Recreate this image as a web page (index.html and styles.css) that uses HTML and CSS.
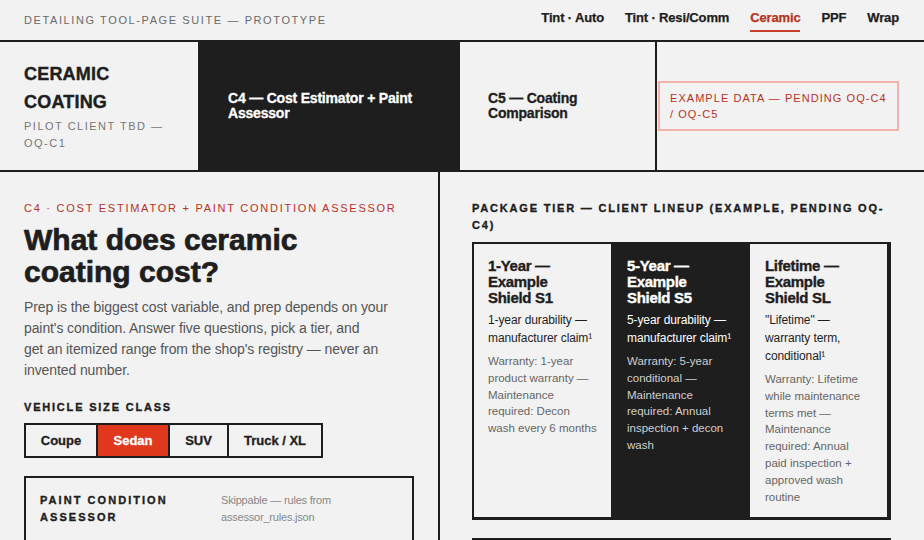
FILE: index.html
```html
<!DOCTYPE html>
<html>
<head>
<meta charset="utf-8">
<link rel="stylesheet" href="styles.css">
</head>
<body>
<header class="topbar">
  <div class="suite">Detailing tool-page suite — prototype</div>
  <nav class="nav">
    <a class="nav-item">Tint · Auto</a>
    <a class="nav-item">Tint · Resi/Comm</a>
    <a class="nav-item active">Ceramic</a>
    <a class="nav-item">PPF</a>
    <a class="nav-item">Wrap</a>
  </nav>
</header>
<section class="tabs">
  <div class="tab brand">
    <div class="brand-title">CERAMIC<br>COATING</div>
    <div class="brand-sub">Pilot client TBD — OQ-C1</div>
  </div>
  <div class="tab tab-dark">C4 — Cost Estimator + Paint Assessor</div>
  <div class="tab tab-light">C5 — Coating Comparison</div>
  <div class="tab tab-badge"><div class="badge">Example data — pending OQ-C4 / OQ-C5</div></div>
</section>
<main class="main">
  <section class="left">
    <div class="eyebrow">C4 · Cost estimator + paint condition assessor</div>
    <h1 class="title">What does ceramic coating cost?</h1>
    <p class="lede">Prep is the biggest cost variable, and prep depends on your paint's condition. Answer five questions, pick a tier, and get&nbsp;an itemized range from the shop's registry — never an invented number.</p>
    <div class="label">Vehicle size class</div>
    <div class="seg">
      <button class="seg-btn">Coupe</button>
      <button class="seg-btn on">Sedan</button>
      <button class="seg-btn">SUV</button>
      <button class="seg-btn">Truck / XL</button>
    </div>
    <div class="panel">
      <div class="panel-label">Paint condition assessor</div>
      <div class="panel-note">Skippable — rules from assessor_rules.json</div>
    </div>
  </section>
  <section class="right">
    <div class="label wide">Package tier — client lineup (example, pending OQ-C4)</div>
    <div class="cards">
      <div class="card">
        <div class="card-title">1-Year — Example Shield S1</div>
        <div class="card-sub">1-year durability — manufacturer claim¹</div>
        <div class="card-body">Warranty: 1-year product warranty — Maintenance required: Decon wash every 6 months</div>
      </div>
      <div class="card dark">
        <div class="card-title">5-Year — Example Shield S5</div>
        <div class="card-sub">5-year durability — manufacturer claim¹</div>
        <div class="card-body">Warranty: 5-year conditional — Maintenance required: Annual inspection + decon wash</div>
      </div>
      <div class="card">
        <div class="card-title">Lifetime — Example Shield SL</div>
        <div class="card-sub">"Lifetime" — warranty term, conditional¹</div>
        <div class="card-body">Warranty: Lifetime while maintenance terms met — Maintenance required: Annual paid inspection + approved wash routine</div>
      </div>
    </div>
    <div class="next-box"></div>
  </section>
</main>
</body>
</html>
```
FILE: styles.css
```css
* { box-sizing: border-box; }
html, body { margin: 0; padding: 0; }
body {
  background: #f2f2f2;
  color: #1e1e1e;
  font-family: "Liberation Sans", Arial, sans-serif;
  width: 924px;
  height: 540px;
  overflow: hidden;
}
.topbar {
  height: 42px;
  border-bottom: 2px solid #1e1e1e;
  display: flex;
  align-items: center;
  justify-content: space-between;
  padding: 0 25px 0 24px;
}
.suite {
  font-size: 11px;
  letter-spacing: 1.6px;
  text-transform: uppercase;
  color: #6a6a6a;
}
.nav { display: flex; gap: 21px; align-items: flex-start; margin-top: 2px; }
.nav-item {
  font-size: 13px;
  font-weight: 700;
  line-height: 16px;
  letter-spacing: -0.15px;
  padding-bottom: 4px;
  border-bottom: 2px solid transparent;
  color: #1e1e1e;
  -webkit-text-stroke: 0.25px currentColor;
}
.nav-item.active { color: #b8321f; border-bottom-color: #c8402c; }

.tabs {
  display: grid;
  grid-template-columns: 198px 262px 195px 1fr;
  height: 130px;
  border-bottom: 2px solid #1e1e1e;
}
.tab { display: flex; align-items: center; }
.brand {
  flex-direction: column;
  align-items: flex-start;
  justify-content: center;
  padding: 0 24px;
  border-right: 1px solid #fafafa;
}
.brand-title {
  font-size: 18px;
  font-weight: 700;
  line-height: 28px;
  letter-spacing: 0.2px;
  -webkit-text-stroke: 0.4px currentColor;
}
.brand-sub {
  font-size: 11px;
  line-height: 17px;
  letter-spacing: 1.5px;
  text-transform: uppercase;
  color: #777;
  margin-top: 2px;
}
.tab-dark {
  background: #1e1e1e;
  color: #fff;
  font-size: 14px;
  font-weight: 700;
  line-height: 15px;
  letter-spacing: -0.2px;
  padding: 0 28px 0 30px;
  -webkit-text-stroke: 0.3px currentColor;
}
.tab-light {
  font-size: 14px;
  font-weight: 700;
  line-height: 15px;
  letter-spacing: -0.2px;
  padding: 0 28px;
  -webkit-text-stroke: 0.3px currentColor;
}
.tab-badge { border-left: 2px solid #1e1e1e; padding: 0 25px 0 1px; }
.badge {
  width: 100%;
  border: 2px solid #f3b3aa;
  color: #b8321f;
  font-size: 11px;
  line-height: 16px;
  letter-spacing: 1.05px;
  text-transform: uppercase;
  padding: 7px 10px;
}

.main { display: grid; grid-template-columns: 440px 1fr; }
.left { border-right: 2px solid #1e1e1e; padding: 28px 24px 0 24px; }
.right { padding: 28px 33px 0 32px; }
.eyebrow {
  font-size: 11px;
  line-height: 16px;
  letter-spacing: 1.75px;
  text-transform: uppercase;
  color: #b8321f;
}
.title {
  margin: 8px 0 0;
  font-size: 30px;
  line-height: 32px;
  font-weight: 700;
  letter-spacing: 0;
  width: 320px;
  -webkit-text-stroke: 0.7px currentColor;
}
.lede {
  margin: 9px 0 0;
  font-size: 14px;
  line-height: 21px;
  color: #555;
  letter-spacing: -0.1px;
  width: 368px;
}
.label {
  margin-top: 18px;
  font-size: 11px;
  line-height: 17px;
  font-weight: 700;
  letter-spacing: 1.8px;
  text-transform: uppercase;
  -webkit-text-stroke: 0.35px currentColor;
}
.label.wide { margin-top: 0; width: 419px; }
.seg {
  margin-top: 7px;
  display: inline-flex;
  border: 2px solid #1e1e1e;
}
.seg-btn {
  font-family: "Liberation Sans", Arial, sans-serif;
  font-size: 13px;
  font-weight: 700;
  color: #1e1e1e;
  background: transparent;
  border: 0;
  border-right: 2px solid #1e1e1e;
  height: 31px;
  padding: 0;
  letter-spacing: 0;
  -webkit-text-stroke: 0.3px currentColor;
}
.seg-btn:last-child { border-right: 0; }
.seg-btn:nth-child(1) { width: 72px; }
.seg-btn:nth-child(2) { width: 72px; }
.seg-btn:nth-child(3) { width: 59px; }
.seg-btn:nth-child(4) { width: 92px; }
.seg-btn.on { background: #e0381c; color: #fff; }
.panel {
  margin-top: 18px;
  border: 2px solid #1e1e1e;
  border-bottom: 0;
  height: 80px;
  padding: 14px 14px 0 14px;
  display: flex;
  gap: 16px;
}
.panel-label {
  width: 165px;
  font-size: 11px;
  line-height: 17px;
  font-weight: 700;
  letter-spacing: 2.05px;
  text-transform: uppercase;
  -webkit-text-stroke: 0.35px currentColor;
}
.panel-note {
  width: 130px;
  font-size: 11px;
  line-height: 17px;
  color: #888;
  letter-spacing: -0.2px;
}

.cards {
  margin-top: 8px;
  display: grid;
  grid-template-columns: 137px 139px 1fr;
  border-style: solid;
  border-color: #1e1e1e;
  border-width: 2px 4px 3px 2px;
  height: 278px;
}
.card { padding: 14px 16px 0 14px; }
.card:nth-child(1) { padding-right: 12px; }
.card:nth-child(2) { padding-left: 16px; padding-right: 12px; }
.card:nth-child(3) { padding-left: 15px; }
.card.dark { background: #1e1e1e; color: #fff; }
.card-title {
  font-size: 15px;
  line-height: 16px;
  font-weight: 700;
  letter-spacing: -0.3px;
  width: 100px;
  -webkit-text-stroke: 0.35px currentColor;
}
.card-sub {
  margin-top: 5px;
  font-size: 12px;
  line-height: 18px;
  letter-spacing: -0.1px;
}
.card-body {
  margin-top: 6px;
  font-size: 11.5px;
  line-height: 16.8px;
  color: #666;
}
.card.dark .card-body { color: #cfcfcf; }
.next-box { margin-top: 18px; height: 20px; border-top: 3px solid #1e1e1e; }
```
